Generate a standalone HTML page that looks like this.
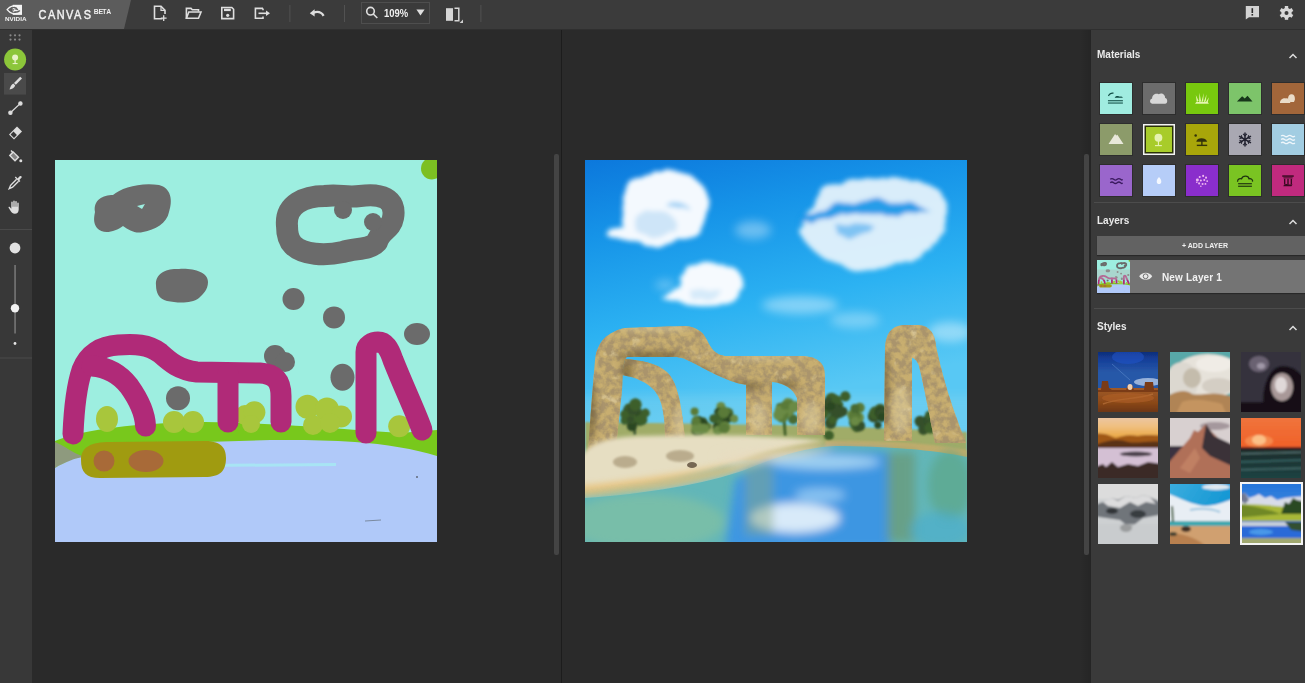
<!DOCTYPE html>
<html><head><meta charset="utf-8">
<style>
*{margin:0;padding:0;box-sizing:border-box}
html,body{width:1305px;height:683px;overflow:hidden;background:#2a2a2a;font-family:"Liberation Sans",sans-serif}
.abs{position:absolute}
#top{left:0;top:0;width:1305px;height:30px;background:#3b3b3b;border-bottom:1px solid #2f2f2f}
#logo{left:0;top:0;width:131px;height:29px;background:#5c5c5c;clip-path:polygon(0 0,131px 0,124px 29px,0 29px)}
#ltb{left:0;top:30px;width:32px;height:653px;background:#383838}
#canvasL{left:32px;top:30px;width:529px;height:653px;background:#2a2a2a}
#div{left:561px;top:30px;width:1px;height:653px;background:#1c1c1c}
#rp{left:1091px;top:30px;width:214px;height:653px;background:#3a3a3a}
.sb{width:6px;background:#444;border-radius:1px}
.sep{height:1px;background:#555}
.hd{color:#eee;font-weight:bold;font-size:10px}
.t{will-change:transform}
</style></head><body>
<div id="top" class="abs"></div>

<div id="logo" class="abs"></div>
<svg class="abs t" style="left:0;top:0" width="131" height="29" viewBox="0 0 131 29">
 <rect x="12.7" y="4.8" width="9.3" height="10.1" fill="#f4f4f4"/>
 <path d="M12.9,5.9 C10.5,6.6 8.4,8 7.1,9.7 C8.4,11.5 10.5,12.9 12.9,13.6" fill="none" stroke="#f4f4f4" stroke-width="1.3"/>
 <path d="M9.6,9.7 C10.8,8.1 12.5,7.3 14.2,7.3 C16,7.4 17.2,8.5 17.6,9.6 C16.6,8.9 15.4,8.7 14.4,9.1" fill="none" stroke="#5e5e5e" stroke-width="1.1"/>
 <path d="M9.6,9.7 C10.8,11.6 12.8,12.5 15,12.5 C17,12.4 19,11.6 20,10.6 C18.5,11.6 16.5,12 14.5,11.5" fill="none" stroke="#5e5e5e" stroke-width="1.1"/>
 <path d="M12.6,9.8 C12.9,8.9 13.6,8.6 14.2,8.8 C13.6,9.4 13.4,10.4 13.8,11.2 C13.1,10.9 12.7,10.4 12.6,9.8 Z" fill="#5e5e5e"/>
 <text x="5" y="21" font-family="Liberation Sans" font-weight="bold" font-size="5.4" fill="#f0f0f0" textLength="21.5" lengthAdjust="spacingAndGlyphs">NVIDIA</text>
 <text transform="scale(0.8 1)" x="48.00 60.12 71.00 82.62 92.50 104.62" y="18.8" font-family="Liberation Sans" font-size="13.7" fill="#f4f4f4" stroke="#f4f4f4" stroke-width="0.45">CANVAS</text>
 <text x="93.8 98.5 102.3 106.3" y="14" font-family="Liberation Sans" font-weight="bold" font-size="6.8" fill="#eeeeee">BETA</text>
</svg>
<svg class="abs t" style="left:131px;top:0" width="1174" height="29" viewBox="131 0 1174 29">
 <g fill="none" stroke="#dedede" stroke-width="1.6" stroke-linejoin="miter">
  <!-- new file -->
  <path d="M162.5,18.8 L154.5,18.8 L154.5,6.3 L161,6.3 L165,10.3 L165,14"/>
  <path d="M161,6.3 L161,10.3 L165,10.3" stroke-width="1.2"/>
  <path d="M163.7,15.2 L163.7,21 M160.8,18.1 L166.6,18.1" stroke-width="1.3"/>
  <!-- folder -->
  <path d="M186.4,18.2 L186.4,8.4 L191,8.4 L192.3,9.8 L198.5,9.8 L198.5,11.6"/>
  <path d="M186.4,18.2 L188.8,12 L201,12 L198.5,18.2 Z"/>
  <!-- save -->
  <path d="M221.8,7.5 L231.8,7.5 L233.6,9.3 L233.6,18.6 L221.8,18.6 Z"/>
  <path d="M224,9.9 L230.8,9.9" stroke-width="2.4"/>
  <!-- export -->
  <path d="M263,8.4 L255.4,8.4 L255.4,18.2 L263,18.2 L263,16.4 M263,8.4 L263,10.2"/>
  <path d="M258.5,13.3 L267,13.3" stroke-width="1.6"/>
 </g>
 <g fill="#dedede">
  <circle cx="227.7" cy="15.3" r="1.6"/>
  <path d="M266,10.6 L270,13.3 L266,16 Z"/>
  <!-- undo -->
  <path d="M309.8,13.2 L314.6,9.2 L314.6,16.6 Z"/>
  <!-- triangle -->
  <path d="M416.4,9.4 L424.6,9.4 L420.5,15.4 Z"/>
 </g>
 <g fill="#525252">
  <rect x="289.4" y="5" width="1" height="17"/>
  <rect x="344" y="5" width="1" height="17"/>
  <rect x="480.4" y="5" width="1" height="17"/>
 </g>
 <path d="M313.5,12.6 C317.5,11.2 321.5,12.2 323.6,15.8" fill="none" stroke="#dedede" stroke-width="2.3"/>
 <rect x="361.5" y="2.5" width="68" height="21" fill="none" stroke="#4e4e4e" stroke-width="1"/>
 <g fill="none" stroke="#dedede" stroke-width="1.6">
  <circle cx="370.5" cy="11.2" r="3.8"/>
  <path d="M373.3,14 L377.3,18"/>
 </g>
 <text x="384" y="16.8" font-family="Liberation Sans" font-weight="bold" font-size="10.6" fill="#f0f0f0" textLength="24.2" lengthAdjust="spacingAndGlyphs">109%</text>
 <!-- compare -->
 <g>
  <rect x="446" y="8.2" width="7" height="12.6" fill="#d6d6d6"/>
  <path d="M454.5,8.2 L458.8,8.2 L458.8,20.8 L454.5,20.8" fill="none" stroke="#d6d6d6" stroke-width="1.5"/>
  <path d="M463,19.6 L463,23 L459.6,23 Z" fill="#cfcfcf"/>
 </g>
 <!-- feedback -->
 <path d="M1245.8,6 L1259,6 L1259,17.2 L1249,17.2 L1245.8,19.4 Z" fill="#d2d2d2"/>
 <rect x="1251.5" y="8.2" width="1.6" height="4.8" fill="#2a2a2a"/>
 <rect x="1251.5" y="14" width="1.6" height="1.6" fill="#2a2a2a"/>
 <!-- gear -->
 <g transform="translate(1286.5,12.9)">
  <g fill="#d8d8d8">
   <circle r="5.2"/>
   <rect x="-1.7" y="-6.9" width="3.4" height="13.8"/>
   <rect x="-1.7" y="-6.9" width="3.4" height="13.8" transform="rotate(60)"/>
   <rect x="-1.7" y="-6.9" width="3.4" height="13.8" transform="rotate(120)"/>
  </g>
  <circle r="2" fill="#3a3a3a"/>
 </g>
</svg>

<div id="ltb" class="abs"></div>
<svg class="abs" style="left:0;top:30px" width="32" height="653" viewBox="0 30 32 653">
 <g fill="#8a8a8a">
  <circle cx="10.5" cy="35.3" r="1.1"/><circle cx="15" cy="35.3" r="1.1"/><circle cx="19.5" cy="35.3" r="1.1"/>
  <circle cx="10.5" cy="39.6" r="1.1"/><circle cx="15" cy="39.6" r="1.1"/><circle cx="19.5" cy="39.6" r="1.1"/>
 </g>
 <circle cx="15.1" cy="59.5" r="11" fill="#8cc63a"/>
 <g fill="#e8f3c8">
  <circle cx="15.1" cy="57.6" r="3"/>
  <rect x="14.5" y="58" width="1.2" height="5"/>
  <rect x="12.6" y="63" width="5" height="1.1"/>
 </g>
 <rect x="4" y="73" width="22" height="21.6" fill="#4a4a4a"/>
 <g fill="#dddddd">
  <path d="M14,83 L20.2,76.8 L22,78.6 L15.8,84.8 Z"/>
  <path d="M13.4,83.6 L15.2,85.4 C14.4,87.8 12.3,88.8 9.5,89.6 C10.4,86.8 11.3,84.6 13.4,83.6 Z"/>
 </g>
 <g stroke="#dddddd" stroke-width="1.3" fill="#dddddd">
  <path d="M10.4,112.8 L20.4,103.4"/>
  <circle cx="10.4" cy="112.8" r="1.6"/>
  <circle cx="20.4" cy="103.4" r="1.6"/>
 </g>
 <!-- eraser -->
 <g fill="#dddddd">
  <path d="M9,134.5 L17,126.5 L22,131.5 L14,139.5 Z"/>
 </g>
 <path d="M10.6,134.5 L13.5,131.6 L16.9,135 L14,137.9 Z" fill="#383838"/>
 <!-- bucket -->
 <g fill="#dddddd">
  <path d="M13,151 L19.5,157.2 L15,161.8 L8.8,155.6 Z"/>
  <circle cx="20.8" cy="160.8" r="1.5"/>
  <rect x="11.7" y="150" width="1.4" height="4" transform="rotate(-45 12.4 152)"/>
 </g>
 <path d="M10.8,155.6 L13.3,153.1 L17.5,157.2 L15,159.7 Z" fill="#383838" opacity="0.55"/>
 <!-- eyedropper -->
 <g fill="#dddddd">
  <path d="M17.5,178.5 L19.7,176.3 C20.8,175.2 22.5,176.6 21.4,177.8 L19.3,180 L20.4,181.1 L19.4,182.1 L14.8,177.5 L15.8,176.5 Z"/>
 </g>
 <path d="M16.6,179.3 L10.6,185.3 L9.2,188.6 L12.6,187.2 L18.6,181.2" fill="none" stroke="#dddddd" stroke-width="1.4"/>
 <!-- hand -->
 <path fill="#dddddd" d="M11.3,205 L11.3,202.2 C11.3,201.3 12.7,201.3 12.7,202.2 L12.7,206.8 L13.3,206.8 L13.3,201.2 C13.3,200.3 14.7,200.3 14.7,201.2 L14.7,206.8 L15.3,206.8 L15.3,201.6 C15.3,200.7 16.7,200.7 16.7,201.6 L16.7,206.8 L17.3,206.8 L17.3,203.2 C17.3,202.3 18.7,202.3 18.7,203.2 L18.7,209.5 C18.7,212.2 17.2,213.8 14.8,213.8 C12.8,213.8 11.8,212.8 10.8,211.3 L8.6,207.8 C8.2,207.1 9.2,206.3 9.8,207 L11.3,208.7 Z"/>
 <rect x="0" y="229" width="32" height="1" fill="#4a4a4a"/>
 <circle cx="15" cy="248" r="5.4" fill="#e2e2e2"/>
 <rect x="14.3" y="265" width="1.5" height="68.5" fill="#7a7a7a"/>
 <circle cx="15" cy="308.3" r="4.2" fill="#f2f2f2"/>
 <circle cx="15" cy="343.5" r="1.4" fill="#e6e6e6"/>
 <rect x="0" y="357.5" width="32" height="1" fill="#4a4a4a"/>
</svg>
<div id="div" class="abs"></div>
<div class="abs sb" style="left:554px;top:154px;height:401px;width:5px;border-radius:2px"></div>
<div class="abs" style="left:1080px;top:30px;width:11px;height:653px;background:linear-gradient(90deg,rgba(0,0,0,0),rgba(0,0,0,0.12))"></div>
<div class="abs sb" style="left:1084px;top:154px;height:401px;width:5px;border-radius:2px"></div>
<div id="rp" class="abs"></div>
<div class="abs t" style="left:1097px;top:49px;color:#eaeaea;font-weight:bold;font-size:10px;line-height:12px">Materials</div>
<svg class="abs" style="left:1286px;top:50px" width="14" height="10"><path d="M3.5,8 L7,4.5 L10.5,8" fill="none" stroke="#dcdcdc" stroke-width="1.5"/></svg>
<div class="abs" style="left:1100px;top:83px;width:32px;height:31px;background:#a0ece0;box-shadow:0 0 0 1px rgba(0,0,0,0.22);"><svg width="32" height="31" style="display:block"><g transform="translate(16 15.5) scale(1.15) translate(-16 -15.5)"><g fill="#0f4a42"><path d="M9,13 C10,11 12,10 14,10.5 L13.5,11.5 C12,11.2 10.5,12 10,13.5 Z"/><path d="M15,14.5 C16,13 18,13 19.5,14 C20.5,13.6 21.5,14 22,14.8 L15,14.8 Z"/><rect x="9" y="17" width="13" height="0.9"/><rect x="9" y="19" width="13" height="0.9"/></g></g></svg></div>
<div class="abs" style="left:1143px;top:83px;width:32px;height:31px;background:#6c6c6c;box-shadow:0 0 0 1px rgba(0,0,0,0.22);"><svg width="32" height="31" style="display:block"><g transform="translate(16 15.5) scale(1.15) translate(-16 -15.5)"><path fill="#d8d8d8" d="M10,20 C7.8,20 7.5,16.2 10,15.6 C10,12.4 13,10.6 15.8,11.8 C18,10 21.6,11.8 21.3,15 C23.8,15.3 23.8,20 21.3,20 Z"/></g></svg></div>
<div class="abs" style="left:1186px;top:83px;width:32px;height:31px;background:#78c80e;box-shadow:0 0 0 1px rgba(0,0,0,0.22);"><svg width="32" height="31" style="display:block"><g transform="translate(16 15.5) scale(1.15) translate(-16 -15.5)"><g fill="#e6f5b0"><path d="M10,20 L22,20 L21,18.5 L11,18.5 Z"/><path d="M11.5,18.6 L10.6,12.5 L13,17.5 Z"/><path d="M13.5,18.6 L13.8,10.5 L15.2,18 Z"/><path d="M15.5,18.6 L17.5,11 L17,18 Z"/><path d="M17.5,18.6 L20,12 L19.2,18.2 Z"/><path d="M19.5,18.6 L22,14.5 L21,18.5 Z"/></g></g></svg></div>
<div class="abs" style="left:1229px;top:83px;width:32px;height:31px;background:#7dc46a;box-shadow:0 0 0 1px rgba(0,0,0,0.22);"><svg width="32" height="31" style="display:block"><g transform="translate(16 15.5) scale(1.15) translate(-16 -15.5)"><path fill="#17361a" d="M9,18 L13.5,13.5 L15.8,15.5 L18.2,13 L22.5,18 Z"/></g></svg></div>
<div class="abs" style="left:1272px;top:83px;width:32px;height:31px;background:#a2663a;box-shadow:0 0 0 1px rgba(0,0,0,0.22);"><svg width="32" height="31" style="display:block"><g transform="translate(16 15.5) scale(1.15) translate(-16 -15.5)"><g fill="#eadcc8"><path d="M9,19.5 C9,16.8 11.5,15 14,15.4 C16.5,15.2 18,17 18,19.5 Z"/><path d="M16,16 C16,13 17.5,11.5 19.5,11.8 C21.5,12 22.2,14 22,16.5 L21.2,18.5 L18,18.5 Z"/></g></g></svg></div>
<div class="abs" style="left:1100px;top:124px;width:32px;height:31px;background:#8c9b6a;box-shadow:0 0 0 1px rgba(0,0,0,0.22);"><svg width="32" height="31" style="display:block"><g transform="translate(16 15.5) scale(1.15) translate(-16 -15.5)"><path fill="#e8e8da" d="M9.5,19.5 L15.2,10.8 L16.2,12 L17.2,11.4 L22.5,19.5 Z"/></g></svg></div>
<div class="abs" style="left:1143px;top:124px;width:32px;height:31px;background:#a8cc2a;box-shadow:inset 0 0 0 1.5px #f4f4f4, inset 0 0 0 3px #2a3008;"><svg width="32" height="31" style="display:block"><g transform="translate(16 15.5) scale(1.15) translate(-16 -15.5)"><g fill="#e6f2b0"><circle cx="15.5" cy="14" r="3.4"/><rect x="15" y="16" width="1" height="4.5"/><rect x="12.5" y="20.3" width="6" height="1"/></g></g></svg></div>
<div class="abs" style="left:1186px;top:124px;width:32px;height:31px;background:#a8a60a;box-shadow:0 0 0 1px rgba(0,0,0,0.22);"><svg width="32" height="31" style="display:block"><g transform="translate(16 15.5) scale(1.15) translate(-16 -15.5)"><g fill="#33320a"><path d="M11,17.5 C11.5,13.5 19.5,13.5 20.5,17.5 Z"/><rect x="15.3" y="16" width="1.2" height="5"/><rect x="11.5" y="20" width="9" height="1.2"/><circle cx="10.5" cy="12" r="1.1"/></g></g></svg></div>
<div class="abs" style="left:1229px;top:124px;width:32px;height:31px;background:#a9a8b2;box-shadow:0 0 0 1px rgba(0,0,0,0.22);"><svg width="32" height="31" style="display:block"><g transform="translate(16 15.5) scale(1.15) translate(-16 -15.5)"><g stroke="#222230" stroke-width="1.3" fill="none"><path d="M16,9.5 L16,21.5 M10.8,12.5 L21.2,18.5 M10.8,18.5 L21.2,12.5"/><g stroke-width="0.9"><path d="M14.3,10.6 L16,12.2 L17.7,10.6 M14.3,20.4 L16,18.8 L17.7,20.4"/><path d="M11.2,14.8 L13.4,14 L12.8,11.8 M20.8,16.2 L18.6,17 L19.2,19.2"/><path d="M11.2,16.2 L13.4,17 L12.8,19.2 M20.8,14.8 L18.6,14 L19.2,11.8"/></g></g></g></svg></div>
<div class="abs" style="left:1272px;top:124px;width:32px;height:31px;background:#a2cde2;box-shadow:0 0 0 1px rgba(0,0,0,0.22);"><svg width="32" height="31" style="display:block"><g transform="translate(16 15.5) scale(1.15) translate(-16 -15.5)"><g fill="none" stroke="#eef6fb" stroke-width="1.2"><path d="M10,12.5 Q11.5,11.3 13,12.5 T16,12.5 T19,12.5 T22,12.5"/><path d="M10,15.5 Q11.5,14.3 13,15.5 T16,15.5 T19,15.5 T22,15.5"/><path d="M10,18.5 Q11.5,17.3 13,18.5 T16,18.5 T19,18.5 T22,18.5"/></g></g></svg></div>
<div class="abs" style="left:1100px;top:165px;width:32px;height:31px;background:#9a66cc;box-shadow:0 0 0 1px rgba(0,0,0,0.22);"><svg width="32" height="31" style="display:block"><g transform="translate(16 15.5) scale(1.15) translate(-16 -15.5)"><g fill="none" stroke="#3a1a5e" stroke-width="1.2"><path d="M11,14.5 Q12.5,13.2 14,14.5 T17,14.5 T20,14.5 T21.5,14.5"/><path d="M11,17.5 Q12.5,16.2 14,17.5 T17,17.5 T20,17.5 T21.5,17.5"/></g></g></svg></div>
<div class="abs" style="left:1143px;top:165px;width:32px;height:31px;background:#b6cdf8;box-shadow:0 0 0 1px rgba(0,0,0,0.22);"><svg width="32" height="31" style="display:block"><g transform="translate(16 15.5) scale(1.15) translate(-16 -15.5)"><path fill="#f4f8ff" d="M16,12.5 C17.3,14 18,15 18,16.5 C18,17.8 17,18.5 16,18.5 C15,18.5 14,17.8 14,16.5 C14,15 14.7,14 16,12.5 Z"/></g></svg></div>
<div class="abs" style="left:1186px;top:165px;width:32px;height:31px;background:#8a2ecc;box-shadow:0 0 0 1px rgba(0,0,0,0.22);"><svg width="32" height="31" style="display:block"><g transform="translate(16 15.5) scale(1.15) translate(-16 -15.5)"><g fill="#f0b8f0"><circle cx="12" cy="15" r="1.3"/><circle cx="14" cy="12.5" r="0.9"/><circle cx="17" cy="11.5" r="0.9"/><circle cx="19.5" cy="13" r="0.9"/><circle cx="15" cy="15.5" r="0.9"/><circle cx="18" cy="15" r="0.9"/><circle cx="20.5" cy="16" r="0.8"/><circle cx="13.5" cy="18" r="0.9"/><circle cx="16.5" cy="18.5" r="0.9"/><circle cx="19" cy="18.5" r="0.8"/><circle cx="15" cy="20.5" r="0.7"/><circle cx="11.5" cy="17" r="0.7"/></g></g></svg></div>
<div class="abs" style="left:1229px;top:165px;width:32px;height:31px;background:#7ac422;box-shadow:0 0 0 1px rgba(0,0,0,0.22);"><svg width="32" height="31" style="display:block"><g transform="translate(16 15.5) scale(1.15) translate(-16 -15.5)"><g fill="none" stroke="#1f3410" stroke-width="1.1"><path d="M9.5,16.5 C9.5,14 12,13.5 13,14 C14,11 19,11 19.5,14 C21.5,13.5 23,15 22.5,16.5"/></g><g fill="#1f3410"><rect x="10" y="17.8" width="12" height="1"/><rect x="10" y="20" width="12" height="1"/></g></g></svg></div>
<div class="abs" style="left:1272px;top:165px;width:32px;height:31px;background:#c02a7e;box-shadow:0 0 0 1px rgba(0,0,0,0.22);"><svg width="32" height="31" style="display:block"><g transform="translate(16 15.5) scale(1.15) translate(-16 -15.5)"><g fill="#3a0a22"><rect x="11" y="11" width="10" height="1.3"/><rect x="12" y="12.8" width="8" height="0.8"/><rect x="12.5" y="14" width="1.2" height="5"/><rect x="15.4" y="14" width="1.2" height="5"/><rect x="18.3" y="14" width="1.2" height="5"/><path d="M12,20 C13,18.5 15,18 17,19 L20,19 L19,20.5 L12,20.5 Z"/></g></g></svg></div>
<svg class="abs" style="left:55px;top:160px" width="382" height="382" viewBox="0 0 382 382"><g id="drw">
 <rect width="382" height="382" fill="#9deee0"/>
 <circle cx="377" cy="8.5" r="11" fill="#7cbf22"/>
 <!-- clouds -->
 <g fill="#6b6b6b">
  <path d="M40,52 C38,40 48,35 58,35 C66,28 85,22 104,25 C116,28 118,40 114,52 C112,63 100,70 88,72 C80,74 74,70 68,66 C60,72 48,75 42,68 C38,63 39,57 40,52 Z"/>
  <path d="M101,125 C100,113 112,108 124,109 C138,108 153,112 153,122 C153,130 148,134 144,138 C136,144 122,143 112,141 C104,139 101,133 101,125 Z"/>
  <circle cx="238.5" cy="139" r="11"/>
  <circle cx="279" cy="157.4" r="11"/>
  <ellipse cx="362" cy="174" rx="13" ry="11"/>
  <circle cx="220" cy="196" r="11"/><circle cx="230" cy="202" r="10"/>
  <ellipse cx="287.5" cy="217.3" rx="12" ry="13.5"/>
  <circle cx="123" cy="238.3" r="12"/>
 </g>
 <path d="M232,66 C230,44 250,36 270,36 C285,34 290,38 305,36 C325,33 342,38 338,58 C336,70 325,70 322,82 C315,90 300,88 288,92 C270,96 248,95 238,85 C233,80 232,72 232,66 Z" fill="none" stroke="#6b6b6b" stroke-width="22" stroke-linejoin="round"/>
 <circle cx="288" cy="50" r="9" fill="#6b6b6b"/>
 <circle cx="318" cy="62" r="9" fill="#6b6b6b"/>
 <path d="M82,46 L90,44 L87,49 Z" fill="#9deee0"/>
 <!-- ground -->
 <path d="M0,281 C30,269 80,263 150,262 C220,263 300,270 345,273 L382,270 L382,300 L0,310 Z" fill="#78c81c"/>
 <path d="M0,282 C5,284 10,287 13,289 C18,292 24,295 29,297 C20,299 8,303 0,308 Z" fill="#8e9a7e"/>
 <path d="M0,308 C10,302 20,298 29,297 C55,291 90,285 150,282 C200,280 250,279 300,282 C330,284 360,289 382,296 L382,382 L0,382 Z" fill="#b0c9f9"/>
 <path d="M150,304 L281,303 L281,306 L150,307 Z" fill="#a8e4f4"/>
 <circle cx="362" cy="317" r="1" fill="#606878"/>
 <path d="M310,361 L326,360" stroke="#7a8aa0" stroke-width="1"/>
 <path d="M26,300 C26,287 36,282 55,282 L150,281 C168,281 171,290 171,298 C171,311 165,317 150,317 L45,318 C31,318 26,312 26,300 Z" fill="#a09b10"/>
 <circle cx="49" cy="301" r="10.5" fill="#a86a38"/>
 <ellipse cx="91" cy="301" rx="17.5" ry="11" fill="#a86a38"/>
 <!-- bushes -->
 <g fill="#a8c63c">
  <ellipse cx="52" cy="259" rx="11" ry="13"/>
  <circle cx="119" cy="262" r="11"/><circle cx="138" cy="262" r="11"/>
  <circle cx="190" cy="255" r="10"/><circle cx="199.4" cy="252.3" r="11"/><circle cx="196" cy="264" r="9"/>
  <circle cx="252.5" cy="246.7" r="12"/><circle cx="272" cy="249.5" r="12"/><circle cx="286" cy="256.5" r="11"/><circle cx="258" cy="265" r="10"/><circle cx="275" cy="263" r="10"/>
  <circle cx="344.2" cy="266.3" r="11"/>
 </g>
 <!-- arches -->
 <g fill="none" stroke="#b02a78" stroke-width="21" stroke-linecap="round" stroke-linejoin="round">
  <path d="M18,274 C19,250 21,228 27,210 C33,194 46,186 63,185 C80,184 93,184 105,193 C115,202 124,210 142,212 L205,213 C220,214 226,221 226,236 L226,262"/>
  <path d="M37,206 C50,207 63,212 74,226 C84,240 90,252 90.5,266"/>
  <path d="M173,214 L173,262"/>
  <path d="M311,273 L311,192 C311,185 318,182 323,182 C330,182 334,188 338,200 C350,230 362,255 367,270"/>
 </g>
</g></svg>
<svg class="abs" style="left:585px;top:160px" width="382" height="382" viewBox="0 0 382 382">
 <defs>
  <linearGradient id="sky" x1="0" y1="0" x2="0.2" y2="1">
   <stop offset="0" stop-color="#0c78dc"/>
   <stop offset="0.2" stop-color="#1694e8"/>
   <stop offset="0.45" stop-color="#2cb2f2"/>
   <stop offset="0.7" stop-color="#58c8f4"/>
  </linearGradient>
  <filter id="b1" x="-30%" y="-30%" width="160%" height="160%"><feGaussianBlur stdDeviation="1"/></filter>
  <filter id="b2" x="-30%" y="-30%" width="160%" height="160%"><feGaussianBlur stdDeviation="2"/></filter>
  <filter id="b3" x="-30%" y="-30%" width="160%" height="160%"><feGaussianBlur stdDeviation="3"/></filter>
  <filter id="b5" x="-30%" y="-30%" width="160%" height="160%"><feGaussianBlur stdDeviation="5"/></filter>
  <filter id="rock" x="-10%" y="-10%" width="120%" height="120%">
   <feTurbulence type="fractalNoise" baseFrequency="0.14" numOctaves="3" seed="7" result="n"/>
   <feColorMatrix in="n" type="matrix" values="0 0 0 0 0.40  0 0 0 0 0.30  0 0 0 0 0.15  3.2 0 0 0 -1.1" result="c"/>
   <feComposite in="c" in2="SourceGraphic" operator="in" result="cc"/>
   <feTurbulence type="fractalNoise" baseFrequency="0.09" numOctaves="2" seed="11" result="n2"/>
   <feColorMatrix in="n2" type="matrix" values="0 0 0 0 0.88  0 0 0 0 0.80  0 0 0 0 0.56  1.6 0 0 0 -1.0" result="c2"/>
   <feComposite in="c2" in2="SourceGraphic" operator="in" result="cc2"/>
   <feMerge><feMergeNode in="SourceGraphic"/><feMergeNode in="cc2"/><feMergeNode in="cc"/></feMerge>
  </filter>
  <filter id="fluff" x="-20%" y="-20%" width="140%" height="140%">
   <feTurbulence type="fractalNoise" baseFrequency="0.05" numOctaves="3" seed="2" result="n"/>
   <feDisplacementMap in="SourceGraphic" in2="n" scale="10" result="d"/>
   <feGaussianBlur in="d" stdDeviation="2.5"/>
  </filter>
 </defs>
 <rect width="382" height="382" fill="url(#sky)"/>
 <!-- clouds -->
 <g filter="url(#fluff)">
  <path d="M36,56 C32,34 50,14 78,11 C104,9 124,24 124,44 C124,60 112,74 96,80 C84,86 60,88 22,76 C24,70 32,66 38,66 C36,62 36,60 36,56 Z" fill="#f4f9fe"/>
  <path d="M50,60 C55,52 70,50 82,54 C92,58 96,66 90,72 C80,78 60,78 50,70 Z" fill="#c4e0f6" opacity="0.8"/>
  <path d="M82,46 C90,43 100,44 106,49 C98,52 88,52 82,46 Z" fill="#5ab0ec" opacity="0.6"/>
  <path d="M95,118 C98,106 113,101 130,103 C148,105 160,112 158,124 C156,136 145,145 128,146 C110,147 95,145 76,138 C82,133 90,131 95,127 Z" fill="#f6fafe"/>
  <path d="M105,132 C115,126 130,128 140,134 C132,140 115,142 105,138 Z" fill="#c8e2f6" opacity="0.7"/>
  <path d="M222,58 C222,36 246,20 276,18 C310,16 340,20 354,30 C364,42 364,56 358,70 C352,88 336,100 306,107 C276,112 254,108 238,98 C226,90 218,80 214,72 C214,66 218,62 222,58 Z" fill="#eef6fc" opacity="0.9"/>
  <path d="M214,60 C232,48 260,41 290,40 C315,40 332,44 344,49 C322,53 300,55 280,54 C258,55 236,60 214,62 Z" fill="#1e98e8" opacity="0.95"/>
  <path d="M252,68 C262,62 280,62 290,66 C284,76 266,80 254,76 Z" fill="#58b2f0" opacity="0.7"/>
 </g>
 <g fill="#ffffff" filter="url(#b5)">
  <ellipse cx="168" cy="70" rx="18" ry="9" opacity="0.35"/>
  <ellipse cx="215" cy="145" rx="38" ry="9" opacity="0.4"/>
  <ellipse cx="270" cy="160" rx="25" ry="8" opacity="0.3"/>
  <ellipse cx="365" cy="172" rx="22" ry="10" opacity="0.4"/>
  <ellipse cx="80" cy="125" rx="10" ry="5" opacity="0.3"/>
 </g>
 <rect x="-10" y="235" width="402" height="40" fill="#90d8ec" opacity="0.3" filter="url(#b5)"/>
 <!-- grass band -->
 <path d="M0,262 C60,263 150,264 240,266 C300,268 350,270 382,272 L382,300 L0,300 Z" fill="#a0ac68" filter="url(#b1)"/>
 <!-- trees -->
 <g filter="url(#b1)">
  <rect x="48.5" y="262" width="2.5" height="13" fill="#34502a"/>
  <circle cx="44.1" cy="249.8" r="5.9" fill="#2c4622"/><circle cx="46.5" cy="250.5" r="6.0" fill="#34502a"/><circle cx="43.6" cy="247.2" r="3.8" fill="#3e5e2c"/><circle cx="53.3" cy="251.8" r="3.8" fill="#34502a"/><circle cx="53.5" cy="255.3" r="4.3" fill="#3e5e2c"/><circle cx="54.8" cy="261.8" r="3.9" fill="#2c4622"/><circle cx="47.5" cy="255.8" r="6.4" fill="#34502a"/><circle cx="50.9" cy="258.0" r="6.4" fill="#34502a"/><circle cx="46.9" cy="266.1" r="5.1" fill="#2c4622"/><circle cx="47.8" cy="253.0" r="6.4" fill="#34502a"/><circle cx="60.4" cy="253.0" r="4.4" fill="#3e5e2c"/><circle cx="39.9" cy="260.4" r="4.3" fill="#3e5e2c"/><circle cx="47.8" cy="260.8" r="3.5" fill="#2c4622"/><circle cx="49.5" cy="253.4" r="4.6" fill="#3e5e2c"/><circle cx="45.7" cy="255.5" r="4.9" fill="#2c4622"/><circle cx="51.7" cy="258.1" r="6.3" fill="#2c4622"/><circle cx="46.8" cy="258.6" r="5.1" fill="#3e5e2c"/><circle cx="45.6" cy="259.4" r="3.5" fill="#34502a"/><circle cx="48.2" cy="248.9" r="6.4" fill="#34502a"/><circle cx="50.4" cy="244.6" r="6.3" fill="#3e5e2c"/><circle cx="39.5" cy="254.3" r="4.3" fill="#3e5e2c"/><circle cx="56.5" cy="259.7" r="5.9" fill="#3e5e2c"/>
  <circle cx="122.2" cy="266.2" r="3.8" fill="#4a6a30"/><circle cx="110.7" cy="263.7" r="3.9" fill="#4a6a30"/><circle cx="117.9" cy="261.7" r="4.4" fill="#4a6a30"/><circle cx="111.8" cy="270.7" r="5.4" fill="#2c4622"/><circle cx="109.6" cy="251.4" r="4.0" fill="#5a7a38"/><circle cx="118.1" cy="266.6" r="6.3" fill="#5a7a38"/><circle cx="114.4" cy="269.4" r="6.0" fill="#34502a"/><circle cx="112.9" cy="262.2" r="6.4" fill="#2c4622"/><circle cx="118.0" cy="265.0" r="6.0" fill="#6a8a44"/><circle cx="118.5" cy="263.4" r="3.9" fill="#34502a"/><circle cx="116.9" cy="266.7" r="3.9" fill="#34502a"/><circle cx="112.9" cy="268.2" r="6.5" fill="#6a8a44"/><circle cx="117.8" cy="263.3" r="5.0" fill="#2c4622"/><circle cx="112.8" cy="266.9" r="4.9" fill="#6a8a44"/><circle cx="118.9" cy="268.8" r="5.1" fill="#6a8a44"/><circle cx="111.1" cy="260.6" r="4.5" fill="#5a7a38"/>
  <circle cx="133.2" cy="260.3" r="5.1" fill="#3e5e2c"/><circle cx="133.5" cy="267.4" r="5.8" fill="#2c4622"/><circle cx="137.1" cy="259.2" r="4.4" fill="#3e5e2c"/><circle cx="137.1" cy="255.7" r="5.0" fill="#2c4622"/><circle cx="135.9" cy="246.5" r="4.5" fill="#6a8a44"/><circle cx="137.5" cy="259.6" r="5.1" fill="#4a6a30"/><circle cx="136.5" cy="263.9" r="4.4" fill="#3e5e2c"/><circle cx="133.7" cy="252.1" r="4.5" fill="#2c4622"/><circle cx="132.7" cy="270.7" r="4.7" fill="#6a8a44"/><circle cx="142.2" cy="253.9" r="6.4" fill="#4a6a30"/><circle cx="133.1" cy="259.2" r="4.0" fill="#4a6a30"/><circle cx="142.2" cy="257.6" r="5.6" fill="#2c4622"/><circle cx="136.0" cy="255.0" r="5.4" fill="#3e5e2c"/><circle cx="128.7" cy="258.7" r="4.4" fill="#3e5e2c"/><circle cx="138.9" cy="252.3" r="5.7" fill="#5a7a38"/><circle cx="139.8" cy="266.9" r="5.4" fill="#6a8a44"/><circle cx="139.2" cy="268.2" r="5.4" fill="#5a7a38"/><circle cx="149.1" cy="258.7" r="4.0" fill="#6a8a44"/>
  <path d="M197,252 L199,276 L201.5,276 L200,252 Z" fill="#3a5a20"/>
  <circle cx="208.1" cy="259.3" r="4.9" fill="#4a6a30"/><circle cx="204.4" cy="251.4" r="4.6" fill="#4a6a30"/><circle cx="202.4" cy="251.6" r="5.7" fill="#6a8a44"/><circle cx="204.1" cy="250.0" r="4.3" fill="#6a8a44"/><circle cx="204.1" cy="243.7" r="5.1" fill="#5a7a38"/><circle cx="196.8" cy="248.6" r="4.4" fill="#4a6a30"/><circle cx="197.2" cy="256.1" r="6.4" fill="#5a7a38"/><circle cx="193.6" cy="254.9" r="5.4" fill="#6a8a44"/><circle cx="197.7" cy="250.7" r="4.6" fill="#6a8a44"/><circle cx="210.1" cy="246.2" r="5.3" fill="#6a8a44"/><circle cx="202.5" cy="242.7" r="4.6" fill="#6a8a44"/><circle cx="194.9" cy="246.9" r="3.9" fill="#4a6a30"/><circle cx="203.7" cy="245.0" r="4.8" fill="#5a7a38"/><circle cx="195.4" cy="250.3" r="5.6" fill="#6a8a44"/><circle cx="208.6" cy="247.1" r="5.3" fill="#6a8a44"/><circle cx="199.8" cy="245.4" r="4.3" fill="#5a7a38"/>
  <circle cx="243.9" cy="275.5" r="5.0" fill="#3e5e2c"/><circle cx="250.7" cy="253.5" r="5.5" fill="#3e5e2c"/><circle cx="250.0" cy="254.6" r="3.9" fill="#3e5e2c"/><circle cx="256.1" cy="252.9" r="4.3" fill="#3e5e2c"/><circle cx="250.7" cy="245.4" r="4.3" fill="#34502a"/><circle cx="249.3" cy="244.7" r="5.0" fill="#3e5e2c"/><circle cx="240.1" cy="249.9" r="6.1" fill="#34502a"/><circle cx="252.6" cy="252.5" r="4.3" fill="#2c4622"/><circle cx="247.8" cy="258.5" r="5.1" fill="#3e5e2c"/><circle cx="245.6" cy="263.0" r="5.9" fill="#34502a"/><circle cx="253.7" cy="253.6" r="4.9" fill="#34502a"/><circle cx="254.8" cy="244.7" r="3.5" fill="#3e5e2c"/><circle cx="243.7" cy="244.3" r="6.4" fill="#2c4622"/><circle cx="239.1" cy="254.3" r="4.7" fill="#3e5e2c"/><circle cx="246.7" cy="238.9" r="6.2" fill="#3e5e2c"/><circle cx="250.9" cy="249.1" r="6.0" fill="#2c4622"/><circle cx="251.2" cy="240.3" r="5.4" fill="#3e5e2c"/><circle cx="252.3" cy="249.3" r="4.9" fill="#2c4622"/><circle cx="260.3" cy="236.4" r="5.1" fill="#3e5e2c"/><circle cx="242.2" cy="243.6" r="3.7" fill="#34502a"/><circle cx="249.8" cy="255.8" r="3.7" fill="#34502a"/><circle cx="247.4" cy="260.3" r="3.7" fill="#3e5e2c"/><circle cx="249.5" cy="249.3" r="6.0" fill="#34502a"/><circle cx="243.0" cy="240.9" r="3.8" fill="#34502a"/><circle cx="257.8" cy="251.5" r="4.8" fill="#34502a"/><circle cx="246.0" cy="246.0" r="4.0" fill="#2c4622"/>
  <circle cx="273.2" cy="264.8" r="5.5" fill="#4a6a30"/><circle cx="273.2" cy="258.8" r="5.2" fill="#4a6a30"/><circle cx="267.5" cy="262.6" r="3.5" fill="#34502a"/><circle cx="269.9" cy="264.8" r="5.0" fill="#4a6a30"/><circle cx="271.0" cy="259.3" r="5.6" fill="#3e5e2c"/><circle cx="266.5" cy="254.5" r="4.4" fill="#6a8a44"/><circle cx="269.3" cy="256.8" r="3.7" fill="#3e5e2c"/><circle cx="271.8" cy="267.2" r="5.1" fill="#3e5e2c"/><circle cx="274.8" cy="247.7" r="4.9" fill="#5a7a38"/><circle cx="274.7" cy="265.9" r="5.5" fill="#34502a"/><circle cx="271.0" cy="257.3" r="6.1" fill="#6a8a44"/><circle cx="269.5" cy="255.7" r="6.1" fill="#5a7a38"/><circle cx="273.9" cy="257.4" r="5.1" fill="#6a8a44"/><circle cx="271.8" cy="256.2" r="4.0" fill="#5a7a38"/><circle cx="270.8" cy="254.5" r="3.8" fill="#4a6a30"/><circle cx="269.2" cy="258.2" r="5.6" fill="#5a7a38"/><circle cx="270.2" cy="261.2" r="4.5" fill="#6a8a44"/><circle cx="270.0" cy="248.6" r="4.6" fill="#4a6a30"/>
  <circle cx="295.2" cy="249.6" r="5.9" fill="#3e5e2c"/><circle cx="296.1" cy="253.2" r="3.6" fill="#2c4622"/><circle cx="292.6" cy="256.2" r="3.7" fill="#34502a"/><circle cx="295.0" cy="254.5" r="3.6" fill="#3e5e2c"/><circle cx="289.8" cy="251.3" r="4.8" fill="#3e5e2c"/><circle cx="296.8" cy="250.9" r="4.8" fill="#3e5e2c"/><circle cx="289.1" cy="254.5" r="5.5" fill="#34502a"/><circle cx="288.9" cy="256.4" r="6.1" fill="#34502a"/><circle cx="289.9" cy="253.5" r="6.0" fill="#3e5e2c"/><circle cx="291.4" cy="253.2" r="6.2" fill="#3e5e2c"/><circle cx="295.8" cy="252.5" r="6.3" fill="#2c4622"/><circle cx="296.9" cy="254.5" r="6.0" fill="#34502a"/><circle cx="296.9" cy="257.5" r="4.4" fill="#2c4622"/><circle cx="292.9" cy="265.1" r="3.6" fill="#2c4622"/>
  <circle cx="349.6" cy="266.6" r="3.7" fill="#3e5e2c"/><circle cx="352.7" cy="261.9" r="5.5" fill="#34502a"/><circle cx="342.0" cy="266.8" r="5.7" fill="#2c4622"/><circle cx="337.5" cy="267.7" r="4.0" fill="#34502a"/><circle cx="352.7" cy="263.4" r="4.8" fill="#3e5e2c"/><circle cx="347.8" cy="266.1" r="5.8" fill="#3e5e2c"/><circle cx="346.6" cy="267.1" r="6.0" fill="#2c4622"/><circle cx="335.1" cy="261.3" r="5.6" fill="#34502a"/><circle cx="350.7" cy="262.5" r="6.3" fill="#34502a"/><circle cx="343.1" cy="259.4" r="5.0" fill="#34502a"/><circle cx="355.0" cy="268.8" r="4.8" fill="#2c4622"/><circle cx="347.3" cy="266.4" r="6.4" fill="#34502a"/><circle cx="343.6" cy="259.3" r="4.1" fill="#34502a"/><circle cx="349.7" cy="268.2" r="3.8" fill="#2c4622"/><circle cx="349.0" cy="265.7" r="3.7" fill="#2c4622"/><circle cx="346.2" cy="266.9" r="5.1" fill="#3e5e2c"/><circle cx="338.4" cy="270.0" r="5.1" fill="#34502a"/><circle cx="344.3" cy="255.1" r="4.4" fill="#3e5e2c"/><circle cx="361.6" cy="253.4" r="5.2" fill="#34502a"/><circle cx="345.2" cy="268.0" r="5.8" fill="#3e5e2c"/>
 </g>
 <!-- stone arches -->
 <defs>
  <linearGradient id="stg" x1="0" y1="0" x2="0" y2="1" gradientUnits="userSpaceOnUse" y1="165" y2="285">
   <stop offset="0" stop-color="#b09454"/>
   <stop offset="0.5" stop-color="#b4985a"/>
   <stop offset="1" stop-color="#c8ae70"/>
  </linearGradient>
 </defs>
 <clipPath id="archclip">
  <path d="M3,292 C5,260 8,225 10,200 C12,182 22,172 40,168 L100,166 C112,167 118,172 122,180 C126,188 130,195 140,196 L140,215 C125,212 110,200 92,197 L42,197 C38,200 38,212 37,230 L31,288 Z"/>
  <path d="M130,193 C133,195 136,196 140,196 L218,196 C234,197 240,204 240,216 L240,275 L212,275 L212,238 C208,229 200,223 187,222 L162,225 C140,222 120,208 100,199 Z"/>
  <path d="M161,222 L187,220 L187,275 L161,275 Z"/>
  <path d="M40,199 C55,200 72,203 82,212 C92,222 96,240 100,278 L80,278 C80,255 77,240 70,231 C62,222 50,217 37,215 Z"/>
  <path d="M299,281 L300,190 C300,174 306,166 318,165 L334,165 C345,166 350,174 351,186 C358,220 368,250 381,283 L350,283 C345,260 340,230 334,206 C332,200 329,198 327,198 C327,230 327,260 327,281 Z"/>
 </clipPath><g filter="url(#rock)" fill="url(#stg)">
  <path d="M3,292 C5,260 8,225 10,200 C12,182 22,172 40,168 L100,166 C112,167 118,172 122,180 C126,188 130,195 140,196 L140,215 C125,212 110,200 92,197 L42,197 C38,200 38,212 37,230 L31,288 Z"/>
  <path d="M130,193 C133,195 136,196 140,196 L218,196 C234,197 240,204 240,216 L240,275 L212,275 L212,238 C208,229 200,223 187,222 L162,225 C140,222 120,208 100,199 Z"/>
  <path d="M161,222 L187,220 L187,275 L161,275 Z"/>
  <path d="M40,199 C55,200 72,203 82,212 C92,222 96,240 100,278 L80,278 C80,255 77,240 70,231 C62,222 50,217 37,215 Z"/>
  <path d="M299,281 L300,190 C300,174 306,166 318,165 L334,165 C345,166 350,174 351,186 C358,220 368,250 381,283 L350,283 C345,260 340,230 334,206 C332,200 329,198 327,198 C327,230 327,260 327,281 Z"/>
 </g><g clip-path="url(#archclip)"><g filter="url(#b3)" fill="#5a4828" opacity="0.55">
  <ellipse cx="66" cy="196" rx="34" ry="5"/>
  <ellipse cx="118" cy="214" rx="22" ry="5" transform="rotate(25 118 214)"/>
  <ellipse cx="150" cy="226" rx="30" ry="4"/>
  <ellipse cx="200" cy="225" rx="14" ry="4"/>
  <ellipse cx="42" cy="212" rx="6" ry="10"/>
  <ellipse cx="6" cy="250" rx="5" ry="30"/>
  <ellipse cx="300" cy="230" rx="4" ry="40"/>
 </g><g filter="url(#b3)" fill="#e2d4a8" opacity="0.45">
  <ellipse cx="70" cy="168" rx="40" ry="4"/>
  <ellipse cx="180" cy="198" rx="40" ry="3"/>
  <ellipse cx="95" cy="262" rx="8" ry="16"/>
  <ellipse cx="226" cy="258" rx="10" ry="16"/>
  <ellipse cx="316" cy="250" rx="10" ry="24"/>
  <ellipse cx="174" cy="258" rx="9" ry="16"/>
 </g></g>
 
 
 <!-- sand -->
 <path d="M-5,300 C0,285 20,276 60,276 C120,274 200,276 240,281 C210,286 190,290 170,296 C130,312 60,326 -5,332 Z" fill="#e6dec2" filter="url(#b2)"/>
 <path d="M-5,326 C50,320 110,312 150,302 C175,295 200,288 240,284 C230,292 200,298 175,306 C140,320 80,334 -5,340 Z" fill="#e8bc6c" opacity="0.75" filter="url(#b3)"/>
 <g fill="#a89878" opacity="0.7" filter="url(#b1)">
  <ellipse cx="40" cy="302" rx="12" ry="6"/>
  <ellipse cx="95" cy="296" rx="14" ry="6"/>
 </g>
 <ellipse cx="107" cy="305" rx="5" ry="3" fill="#5a4a38" opacity="0.8"/>
 <path d="M240,281 C300,280 350,284 382,290 L382,300 L240,292 Z" fill="#c0ac6c" filter="url(#b1)"/>
 <!-- water -->
 <path d="M0,338 C60,334 120,324 160,310 C190,298 215,288 250,286 C300,286 350,290 382,297 L382,382 L0,382 Z" fill="#62b6b8"/>
 <g filter="url(#b5)">
  <path d="M150,320 C175,300 210,290 250,290 L305,292 L305,390 L140,390 Z" fill="#3c96e2"/>
  <path d="M130,296 C160,290 200,286 250,288 C230,296 190,300 150,306 Z" fill="#e8dcc0" opacity="0.7"/>
  <ellipse cx="240" cy="302" rx="55" ry="7" fill="#c8e8fa" opacity="0.7"/>
  <ellipse cx="210" cy="358" rx="45" ry="15" fill="#ffffff" opacity="0.8"/>
  <ellipse cx="235" cy="335" rx="25" ry="7" fill="#d0ecff" opacity="0.5"/>
  <rect x="302" y="292" width="28" height="90" fill="#6a9a78" opacity="0.75"/>
  <rect x="160" y="305" width="28" height="70" fill="#88a888" opacity="0.5"/>
  <ellipse cx="60" cy="362" rx="80" ry="28" fill="#80c0a4" opacity="0.75"/>
  <ellipse cx="365" cy="325" rx="22" ry="35" fill="#5aa480" opacity="0.6"/>
  <ellipse cx="355" cy="370" rx="30" ry="18" fill="#48aed0" opacity="0.6"/>
 </g>
</svg>

<div class="abs" style="left:1094px;top:202px;width:211px;height:1px;background:#4c4c4c"></div>
<div class="abs t" style="left:1097px;top:215px;color:#eaeaea;font-weight:bold;font-size:10px;line-height:12px">Layers</div>
<svg class="abs" style="left:1286px;top:216px" width="14" height="10"><path d="M3.5,8 L7,4.5 L10.5,8" fill="none" stroke="#dcdcdc" stroke-width="1.5"/></svg>
<div class="abs" style="left:1097px;top:236px;width:208px;height:19px;background:#626262;box-shadow:0 1px 1px rgba(0,0,0,0.3)"></div>
<div class="abs t" style="left:1097px;top:236px;width:216px;height:19px;line-height:19px;text-align:center;color:#f0f0f0;font-weight:bold;font-size:7px">+ ADD LAYER</div>
<div class="abs" style="left:1097px;top:260px;width:208px;height:33px;background:#747474;box-shadow:0 1px 1px rgba(0,0,0,0.3)"></div>
<svg class="abs" style="left:1097px;top:260px" width="33" height="33" viewBox="0 0 382 382"><use href="#drw"/><rect x="0" y="110" width="382" height="120" fill="#b8b8b8" opacity="0.45"/></svg>
<svg class="abs" style="left:1138px;top:270px" width="16" height="13"><path d="M1.2,6.3 C4,1.6 11.6,1.6 14.2,6.3 C11.6,11 4,11 1.2,6.3 Z" fill="#e8e8e8"/><circle cx="7.6" cy="6.3" r="2.4" fill="none" stroke="#707070" stroke-width="1"/></svg>
<div class="abs t" style="left:1162px;top:272px;color:#f2f2f2;font-weight:bold;font-size:10px;line-height:12px;letter-spacing:0.15px">New Layer 1</div>
<div class="abs" style="left:1094px;top:308px;width:211px;height:1px;background:#4c4c4c"></div>
<div class="abs t" style="left:1097px;top:321px;color:#eaeaea;font-weight:bold;font-size:10px;line-height:12px">Styles</div>
<svg class="abs" style="left:1286px;top:322px" width="14" height="10"><path d="M3.5,8 L7,4.5 L10.5,8" fill="none" stroke="#dcdcdc" stroke-width="1.5"/></svg>
<svg class="abs" style="left:1098px;top:352px" width="60" height="60" viewBox="0 0 60 60"><defs><filter id="tf0" x="-20%" y="-20%" width="140%" height="140%"><feGaussianBlur stdDeviation="0.6"/></filter></defs><g filter="url(#tf0)">
<defs><linearGradient id="t1s" x1="0" y1="0" x2="0" y2="1"><stop offset="0" stop-color="#0a2060"/><stop offset="0.3" stop-color="#143e98"/><stop offset="0.6" stop-color="#2858a8"/></linearGradient>
<linearGradient id="t1g" x1="0" y1="0" x2="0" y2="1"><stop offset="0" stop-color="#a05a28"/><stop offset="0.5" stop-color="#8a4818"/><stop offset="1" stop-color="#5a2a10"/></linearGradient></defs>
<rect x="-6" y="-6" width="72" height="44" fill="url(#t1s)"/>
<ellipse cx="30" cy="5" rx="16" ry="7" fill="#2458d0" opacity="0.5"/>
<ellipse cx="50" cy="30" rx="14" ry="4" fill="#c8d8f0" opacity="0.7"/>
<path d="M14,12 L32,28" stroke="#6090d0" stroke-width="1" opacity="0.5"/>
<rect x="-6" y="36" width="72" height="30" fill="url(#t1g)"/>
<path d="M-6,38 L3,38 L4,29 L10,29 L11,36 L14,38 L28,38 L30,33 L34,33 L36,38 L46,38 L47,30 L55,30 L56,38 L66,38 L66,40 L-6,40 Z" fill="#7a3a18"/>
<ellipse cx="32" cy="35" rx="2.5" ry="3" fill="#f0d0b0"/>
<path d="M5,52 C20,46 35,48 55,42" stroke="#c07840" stroke-width="1.5" fill="none" opacity="0.6"/><ellipse cx="30" cy="46" rx="26" ry="5" fill="#b06028" opacity="0.6"/>
</g></svg>
<svg class="abs" style="left:1170px;top:352px" width="60" height="60" viewBox="0 0 60 60"><defs><filter id="tf1" x="-20%" y="-20%" width="140%" height="140%"><feGaussianBlur stdDeviation="1.0"/></filter></defs><g filter="url(#tf1)">
<rect x="-6" y="-6" width="72" height="72" fill="#58a8a8"/>
<ellipse cx="38" cy="24" rx="36" ry="22" fill="#e6e2da"/>
<ellipse cx="12" cy="30" rx="16" ry="20" fill="#dcd8d0"/>
<ellipse cx="44" cy="12" rx="18" ry="8" fill="#f0ece6"/>
<ellipse cx="22" cy="26" rx="9" ry="10" fill="#c4bcac"/>
<ellipse cx="48" cy="34" rx="16" ry="8" fill="#d4cec4"/>
<path d="M-6,66 L-6,46 C4,40 14,36 22,42 C30,44 40,40 50,42 C56,43 62,44 66,46 L66,66 Z" fill="#b08454"/>
<path d="M4,66 L12,50 C22,46 38,48 52,52 L58,66 Z" fill="#c49460"/>
</g></svg>
<svg class="abs" style="left:1241px;top:352px" width="60" height="60" viewBox="0 0 60 60"><defs><filter id="tf2" x="-20%" y="-20%" width="140%" height="140%"><feGaussianBlur stdDeviation="1.0"/></filter></defs><g filter="url(#tf2)">
<rect x="-6" y="-6" width="72" height="72" fill="#34303c"/>
<ellipse cx="18" cy="12" rx="10" ry="8" fill="#6a6272"/>
<ellipse cx="20" cy="14" rx="4" ry="3" fill="#a098a8"/>
<path d="M22,50 C22,30 30,14 42,14 C55,14 66,25 66,40 L66,66 L20,66 Z" fill="#121014"/>
<ellipse cx="41" cy="35" rx="11" ry="14" fill="#a89898"/>
<ellipse cx="40" cy="33" rx="6" ry="8" fill="#e0d8d8"/>
<rect x="-6" y="50" width="72" height="16" fill="#140e12"/>
</g></svg>
<svg class="abs" style="left:1098px;top:418px" width="60" height="60" viewBox="0 0 60 60"><defs><filter id="tf3" x="-20%" y="-20%" width="140%" height="140%"><feGaussianBlur stdDeviation="1.0"/></filter></defs><g filter="url(#tf3)">
<defs><linearGradient id="t4s" x1="0" y1="0" x2="0" y2="1"><stop offset="0" stop-color="#e8c8b8"/><stop offset="0.2" stop-color="#f0c080"/><stop offset="0.4" stop-color="#e8a030"/></linearGradient></defs>
<rect x="-6" y="-6" width="72" height="72" fill="url(#t4s)"/>
<path d="M-6,16 C8,14 12,18 18,20 C24,18 30,16 40,18 C50,16 55,18 66,17 L66,30 L-6,30 Z" fill="#a05818"/>
<path d="M-6,28 C10,22 20,20 30,24 C40,26 50,22 66,24 L66,32 L-6,32 Z" fill="#5a3018"/>
<rect x="-6" y="30" width="72" height="22" fill="#d4c0d4"/>
<ellipse cx="38" cy="36" rx="16" ry="2.5" fill="#4a4048"/>
<path d="M-6,50 L5,46 L8,49 L14,44 L20,49 L30,46 L40,48 L50,44 L66,46 L66,66 L-6,66 Z" fill="#3a2a28"/>
</g></svg>
<svg class="abs" style="left:1170px;top:418px" width="60" height="60" viewBox="0 0 60 60"><defs><filter id="tf4" x="-20%" y="-20%" width="140%" height="140%"><feGaussianBlur stdDeviation="0.8"/></filter></defs><g filter="url(#tf4)">
<rect x="-6" y="-6" width="72" height="72" fill="#d8d0d0"/>
<ellipse cx="45" cy="8" rx="15" ry="4" fill="#908088" opacity="0.7"/>
<rect x="-6" y="28" width="72" height="38" fill="#3a3040"/>
<path d="M-6,50 L20,20 L24,12 L28,14 L36,6 L40,12 L48,20 L66,38 L66,66 L-6,66 Z" fill="#b07058"/>
<path d="M36,6 L44,18 L66,28 L66,50 L40,38 L32,30 Z" fill="#3a3038"/>
<path d="M10,50 L25,30 L30,40 L20,55 Z" fill="#c8886a" opacity="0.7"/>
</g></svg>
<svg class="abs" style="left:1241px;top:418px" width="60" height="60" viewBox="0 0 60 60"><defs><filter id="tf5" x="-20%" y="-20%" width="140%" height="140%"><feGaussianBlur stdDeviation="1.0"/></filter></defs><g filter="url(#tf5)">
<defs><linearGradient id="t6s" x1="0" y1="0" x2="0" y2="1"><stop offset="0" stop-color="#f07840"/><stop offset="1" stop-color="#f06028"/></linearGradient>
<linearGradient id="t6w" x1="0" y1="0" x2="0" y2="1"><stop offset="0" stop-color="#1a2a28"/><stop offset="1" stop-color="#204848"/></linearGradient></defs>
<rect x="-6" y="-6" width="72" height="36" fill="url(#t6s)"/>
<rect x="-6" y="29" width="72" height="37" fill="url(#t6w)"/>
<ellipse cx="18" cy="22" rx="7" ry="5" fill="#fff0c0"/>
<ellipse cx="18" cy="23" rx="14" ry="6" fill="#f8a060" opacity="0.6"/>
<path d="M-6,36 L66,34" stroke="#5a7878" stroke-width="1.2"/>
<path d="M-6,44 L66,42" stroke="#3a6868" stroke-width="1.5"/>
<path d="M-6,52 L66,50" stroke="#4a7070" stroke-width="1.2"/>
<path d="M-6,30 L66,30" stroke="#601818" stroke-width="1.5"/>
</g></svg>
<svg class="abs" style="left:1098px;top:484px" width="60" height="60" viewBox="0 0 60 60"><defs><filter id="tf6" x="-20%" y="-20%" width="140%" height="140%"><feGaussianBlur stdDeviation="1.2"/></filter></defs><g filter="url(#tf6)">
<rect x="-6" y="-6" width="72" height="72" fill="#cdd0d2"/>
<rect x="-6" y="-6" width="72" height="21" fill="#dcdcdc"/>
<path d="M-6,22 L8,17 L14,14 L20,16 L28,12 L38,14 L45,11 L52,13 L66,20 L66,30 L45,34 L32,44 L22,36 L-6,32 Z" fill="#70747a"/>
<path d="M5,18 L14,14 L20,17 L28,12 L38,14 L45,11 L52,13 L58,20 L48,18 L40,22 L32,18 L22,24 L10,22 Z" fill="#eeeeee" opacity="0.85"/>
<ellipse cx="14" cy="27" rx="6" ry="3" fill="#303438"/><ellipse cx="40" cy="30" rx="8" ry="4" fill="#383c40"/>
<ellipse cx="28" cy="44" rx="6" ry="4" fill="#303030"/>
<rect x="-6" y="40" width="72" height="26" fill="#c8cacc" opacity="0.7"/>
</g></svg>
<svg class="abs" style="left:1170px;top:484px" width="60" height="60" viewBox="0 0 60 60"><defs><filter id="tf7" x="-20%" y="-20%" width="140%" height="140%"><feGaussianBlur stdDeviation="1.0"/></filter></defs><g filter="url(#tf7)">
<defs><linearGradient id="t8s" x1="0" y1="0" x2="1" y2="0.6"><stop offset="0" stop-color="#40b0e0"/><stop offset="1" stop-color="#0890d0"/></linearGradient></defs>
<rect x="-6" y="-6" width="72" height="72" fill="url(#t8s)"/>
<path d="M-6,8 C10,14 20,20 35,22 C45,22 55,18 66,14 L66,38 L-6,40 Z" fill="#e8eef4"/>
<path d="M20,26 C30,24 40,24 50,28" stroke="#a0c8e0" stroke-width="2" fill="none"/>
<ellipse cx="46" cy="3" rx="14" ry="3" fill="#e0e8f0"/>
<rect x="-6" y="37" width="72" height="6" fill="#40a8b0"/>
<path d="M-6,42 L66,42 L66,66 L-6,66 Z" fill="#d0a070"/>
<path d="M-6,48 C20,50 30,56 40,66 L-6,66 Z" fill="#b88050"/>
<ellipse cx="16" cy="45" rx="5" ry="3" fill="#403028"/>
<ellipse cx="3" cy="50" rx="4" ry="2" fill="#404030"/>
<path d="M2,22 L3,38" stroke="#305028" stroke-width="2"/>
</g></svg>
<svg class="abs" style="left:1241px;top:484px" width="60" height="60" viewBox="0 0 60 60"><defs><filter id="tf8" x="-20%" y="-20%" width="140%" height="140%"><feGaussianBlur stdDeviation="0.8"/></filter></defs><g filter="url(#tf8)">
<defs><linearGradient id="t9s" x1="0" y1="0" x2="0" y2="1"><stop offset="0" stop-color="#2070d8"/><stop offset="1" stop-color="#60a8e8"/></linearGradient></defs>
<rect x="-6" y="-6" width="72" height="72" fill="url(#t9s)"/>
<path d="M-6,12 L4,9 L8,14 L14,12 L18,10 L24,14 L30,12 L36,16 L44,14 L52,13 L66,12 L66,24 L-6,22 Z" fill="#d8dce8"/>
<path d="M-6,12 L4,9 L8,16 L4,20 Z" fill="#707890"/>
<path d="M-6,20 C20,20 40,22 66,26 L66,38 L-6,38 Z" fill="#a8b838"/>
<path d="M-6,20 C15,22 30,26 40,30 L-6,34 Z" fill="#708828"/>
<path d="M40,30 L44,18 L48,20 L52,14 L56,16 L66,18 L66,30 Z" fill="#2a4a20"/>
<rect x="-6" y="37" width="72" height="29" fill="#2a6ad8"/>
<path d="M-6,38 L66,38 L66,42 L-6,42 Z" fill="#c8d0d8"/>
<path d="M44,38 L66,38 L66,48 L50,46 Z" fill="#305030"/>
<ellipse cx="20" cy="48" rx="12" ry="3" fill="#4898e8"/>
<rect x="-6" y="54" width="72" height="12" fill="#a0a870"/>
</g></svg>
<div class="abs" style="left:1240px;top:482px;width:63px;height:63px;border:2px solid #f4f4f4"></div>
</body></html>
